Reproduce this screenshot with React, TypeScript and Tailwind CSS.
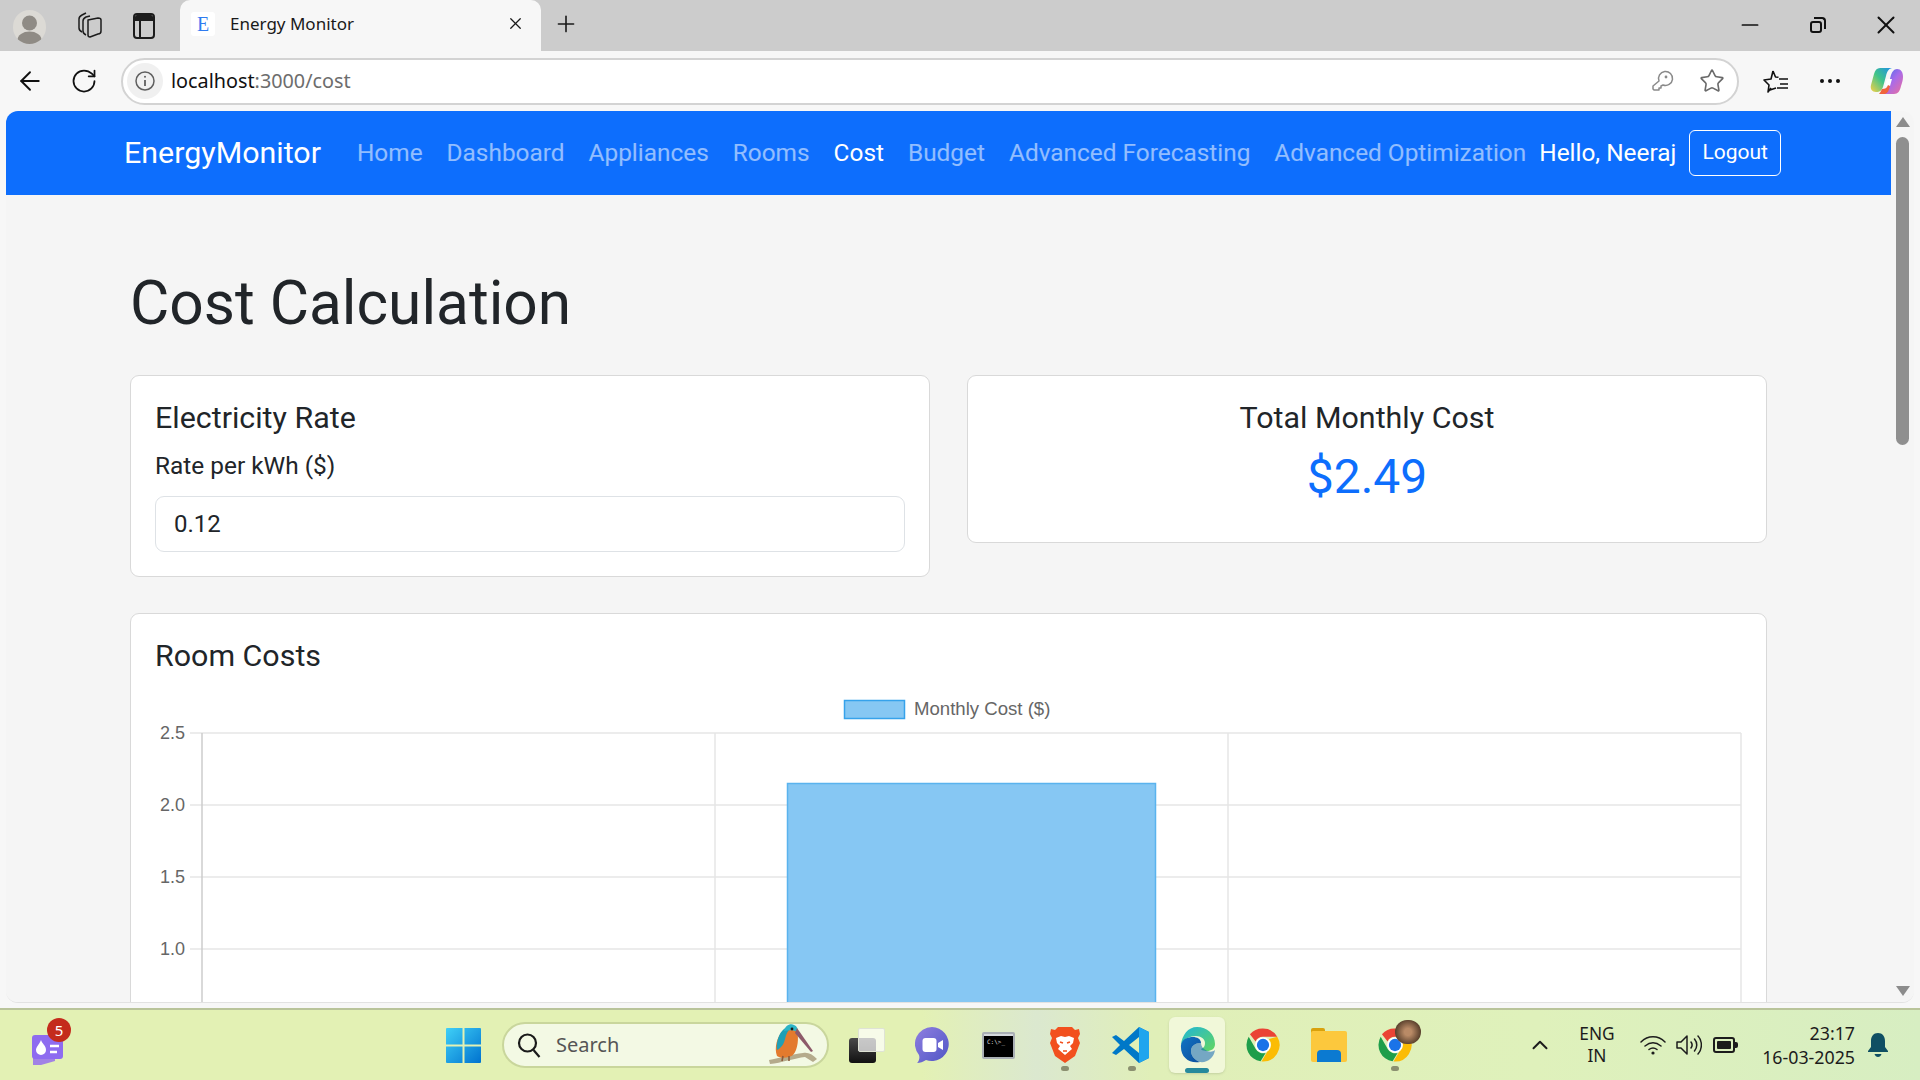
import React from "react";
import { ArrowLeft, RotateCw, Plus, X, Minus, Star, ChevronUp } from "lucide-react";

const navLinks = ["Home", "Dashboard", "Appliances", "Rooms", "Cost", "Budget", "Advanced Forecasting", "Advanced Optimization"];

function Chrome({ size = 36 }: { size?: number }) {
  return (
    <svg width={size} height={size} viewBox="0 0 48 48">
      <path d="M24 2a22 22 0 0 1 19.05 11H24a11 11 0 0 0-9.9 6.2L6.6 9.7A22 22 0 0 1 24 2z" fill="#ea4335" />
      <path d="M4.95 13 14.5 29.5A11 11 0 0 0 27.5 34.5L20.8 45.8A22 22 0 0 1 4.95 13z" fill="#1e9e4a" />
      <path d="M43.05 13A22 22 0 0 1 22 46L31.6 29.5A11 11 0 0 0 31.8 16z" fill="#fbbc04" />
      <circle cx="24" cy="24" r="10.5" fill="#fff" />
      <circle cx="24" cy="24" r="8.2" fill="#1a73e8" />
    </svg>
  );
}

function Copilot() {
  return (
    <svg width="34" height="32" viewBox="0 0 34 32">
      <defs>
        <linearGradient id="cpA" x1="0" y1="1" x2="1" y2="0">
          <stop offset="0" stopColor="#f7d046" />
          <stop offset="0.5" stopColor="#3fc48a" />
          <stop offset="1" stopColor="#1f8fe8" />
        </linearGradient>
        <linearGradient id="cpB" x1="0" y1="0" x2="1" y2="1">
          <stop offset="0" stopColor="#2f6fe8" />
          <stop offset="0.5" stopColor="#a86bea" />
          <stop offset="1" stopColor="#ee6f9a" />
        </linearGradient>
      </defs>
      <path d="M10 3h12c-4 1-5 4-6 8l-3 11c-1 3-3 5-7 5-4 0-6-3-5-7l3-11C5 5 7 3 10 3z" fill="url(#cpA)" />
      <path d="M24 29H12c4-1 5-4 6-8l3-11c1-3 3-6 6-6 4 0 6 3 6 8 0 3-1 6-2 9-1 5-3 8-7 8z" fill="url(#cpB)" />
      <path d="M17 14h5l-2 7h-5z" fill="#fff" />
      <path d="M12 24c3 0 5-1 6-4l2 1c-1 4-2 7-5 8H9c1-1 2-3 3-5z" fill="#f0643c" />
    </svg>
  );
}

function Bird() {
  return (
    <svg width="56" height="46" viewBox="0 0 56 46">
      <path d="M4 38c10-2 24-6 34-7 5-1 9 1 14 6l-4 3-8-5c-10 1-24 6-35 7z" fill="#b5ab8c" />
      <path d="M12 34c-3-8 0-20 6-25 5-5 12-4 14 1 2 5 1 18-4 23-4 3-12 4-16 1z" fill="#e37a2e" />
      <path d="M12 28c-1-8 2-17 7-21 3-2 6-3 8-2-4 3-6 7-7 12-1 5-4 9-8 11z" fill="#1f9fb5" />
      <path d="M19 9c1-5 6-8 10-6 3 1 4 4 4 7-4-2-9-2-14-1z" fill="#2cb4c6" />
      <path d="M32 6l16 23-2 1L30 11z" fill="#8d5a6a" />
      <circle cx="27" cy="7" r="1.4" fill="#1a1a1a" />
      <path d="M18 34l-1 5M24 34l0 5" stroke="#8a5a3a" strokeWidth="1.6" />
    </svg>
  );
}

function Chart() {
  const hLines = [733, 805, 877, 949];
  const labels = ["2.5", "2.0", "1.5", "1.0"];
  const ox = 155;
  const oy = 686;
  return (
    <svg width="1587" height="330" viewBox={`${ox} ${oy} 1587 330`} className="block">
      <rect x="844.5" y="700.5" width="60" height="18" fill="#86c7f3" stroke="#36a2eb" strokeWidth="1.5" />
      <text x="914" y="715" fontFamily="Liberation Sans" fontSize="18.6" fill="#666666">Monthly Cost ($)</text>
      {hLines.map((y, i) => (
        <g key={y}>
          <line x1="190" x2="1741" y1={y} y2={y} stroke="#e6e6e6" strokeWidth="1.5" />
          <text x="185" y={y + 6} textAnchor="end" fontFamily="Liberation Sans" fontSize="18" fill="#666666">{labels[i]}</text>
        </g>
      ))}
      <line x1="202" x2="202" y1="733" y2="1016" stroke="#cccccc" strokeWidth="1.5" />
      <line x1="715" x2="715" y1="733" y2="1016" stroke="#e6e6e6" strokeWidth="1.5" />
      <line x1="1228" x2="1228" y1="733" y2="1016" stroke="#e6e6e6" strokeWidth="1.5" />
      <line x1="1741" x2="1741" y1="733" y2="1016" stroke="#e6e6e6" strokeWidth="1.5" />
      <rect x="787.5" y="783.5" width="368" height="240" fill="#86c7f3" stroke="#5ab3ee" strokeWidth="1.5" />
    </svg>
  );
}

function TabStrip() {
  return (
    <div className="h-[51px] bg-[#cccccc] flex items-end shrink-0">
      <div className="ml-[13px] mb-[7px] w-[33px] h-[34px] rounded-full bg-[#dcdad5] overflow-hidden flex items-center justify-center">
        <svg width="33" height="34" viewBox="0 0 33 34">
          <circle cx="16.5" cy="13" r="7.5" fill="#8f8b85" />
          <ellipse cx="16.5" cy="30" rx="12" ry="8.5" fill="#8f8b85" />
        </svg>
      </div>
      <div className="ml-[31px] mb-[13px]">
        <svg width="26" height="26" viewBox="0 0 26 26" fill="none" stroke="#1c1c1c" strokeWidth="1.5" strokeLinejoin="round">
          <path d="M5 20c-2-1-3-3-3-4V7c0-2 1-3 3-4l4-2" />
          <path d="M9 23c-2-1-3-2-3-4V9c0-2 1-3 3-4l4-1" />
          <path d="M11 8l10-2c2 0 3 1 3 2v11c0 2-1 3-3 3l-8 3c-1 0-2-1-2-2z" />
        </svg>
      </div>
      <div className="ml-[30px] mb-[12px] w-[22px] h-[26px] rounded-[4px] border-2 border-[#1c1c1c] overflow-hidden flex flex-col">
        <div className="h-[6px] bg-[#1c1c1c]" />
        <div className="flex-1 w-[6px] border-r-2 border-[#1c1c1c]" />
      </div>
      <div className="ml-[25px] w-[361px] h-[51px] bg-[#f7f7f7] rounded-t-[10px] flex items-center pl-[11px] pr-[16px] pb-[4px]">
        <div className="w-[24px] h-[24px] bg-white rounded-[3px] flex items-center justify-center text-[#2f7bf0] text-[20px] font-['Liberation_Serif',serif]">E</div>
        <span className="ml-[15px] text-[17px] text-[#1a1a1a] font-['Noto_Sans',sans-serif] flex-1">Energy Monitor</span>
        <X size={19} strokeWidth={1.6} className="text-[#1a1a1a]" />
      </div>
      <Plus size={26} strokeWidth={1.5} className="ml-[12px] mb-[14px] text-[#1a1a1a]" />
      <div className="flex-1" />
      <Minus size={26} strokeWidth={1.6} className="mb-[13px] text-[#111111]" />
      <div className="ml-[47px] mb-[18px] relative w-[16px] h-[16px]">
        <div className="absolute left-0 bottom-0 w-[12px] h-[12px] rounded-[3px] border-2 border-[#111111]" />
        <div className="absolute right-0 top-0 w-[12px] h-[12px] rounded-tr-[4px] border-t-2 border-r-2 border-[#111111]" />
      </div>
      <X size={30} strokeWidth={1.6} className="ml-[45px] mb-[11px] mr-[19px] text-[#111111]" />
    </div>
  );
}

function Toolbar() {
  return (
    <div className="h-[60px] bg-[#f7f7f7] flex items-center shrink-0">
      <ArrowLeft size={30} strokeWidth={1.5} className="ml-[15px] text-[#111111]" />
      <RotateCw size={28} strokeWidth={1.5} className="ml-[25px] text-[#111111]" />
      <div className="ml-[23px] w-[1618px] h-[47px] rounded-full border-2 border-[#d3d3d3] bg-white flex items-center pl-[4px] pr-[12px]">
        <div className="w-[36px] h-[36px] rounded-full bg-[#f0f0f0] flex items-center justify-center">
          <svg width="22" height="22" viewBox="0 0 22 22" fill="none" stroke="#5f5f5f" strokeWidth="1.5">
            <circle cx="11" cy="11" r="9" />
            <path d="M11 10v6" strokeWidth="1.8" />
            <circle cx="11" cy="6.8" r="1" fill="#5f5f5f" stroke="none" />
          </svg>
        </div>
        <span className="ml-[8px] text-[19.8px] font-['Noto_Sans',sans-serif] text-[#111111]">
          localhost<span className="text-[#6d6d6d]">:3000/cost</span>
        </span>
        <div className="flex-1" />
        <svg width="24" height="24" viewBox="0 0 24 24" fill="none" stroke="#8a8a8a" strokeWidth="1.5" strokeLinejoin="round">
          <path d="M9 12a7 7 0 1 1 4 4l-2 1v2H9v2H4l-1-1v-3z" />
          <circle cx="16" cy="8" r="1.4" fill="#8a8a8a" stroke="none" />
        </svg>
        <Star size={26} strokeWidth={1.5} className="ml-[25px] text-[#6a6a6a]" />
      </div>
      <svg className="ml-[24px]" width="26" height="26" viewBox="0 0 26 26" fill="none" stroke="#111111" strokeWidth="1.6" strokeLinejoin="round">
        <path d="M10 3l2.5 6 3 .3M8 20l-3 4 1-7-5-5 7-1 2-8M7 22l6-2" />
        <path d="M16 11h9M17 16h8M14 20h11" />
      </svg>
      <div className="ml-[31px] flex gap-[4px]">
        <div className="w-[4px] h-[4px] rounded-full bg-[#111111]" />
        <div className="w-[4px] h-[4px] rounded-full bg-[#111111]" />
        <div className="w-[4px] h-[4px] rounded-full bg-[#111111]" />
      </div>
      <div className="ml-[30px]">
        <Copilot />
      </div>
    </div>
  );
}

function Scrollbar() {
  return (
    <div className="w-[23px] bg-[#f5f5f5] flex flex-col items-center shrink-0 pt-[6px] pb-[6px]">
      <div className="w-0 h-0 border-l-[7px] border-r-[7px] border-b-[10px] border-l-transparent border-r-transparent border-b-[#8c8c8c]" />
      <div className="mt-[10px] w-[13px] h-[308px] rounded-full bg-[#8f8f8f]" />
      <div className="flex-1" />
      <div className="w-0 h-0 border-l-[7px] border-r-[7px] border-t-[10px] border-l-transparent border-r-transparent border-t-[#8c8c8c]" />
    </div>
  );
}

function Page() {
  return (
    <div className="flex-1 min-w-0 overflow-hidden bg-[#f5f5f5] font-['Roboto',sans-serif] text-[#212529]">
      <nav className="h-[84px] bg-[#0d6efd] flex items-center pl-[118px]">
        <span className="text-[30.4px] text-white mr-[24px]">EnergyMonitor</span>
        {navLinks.map((l) => (
          <span key={l} className={`px-[12px] text-[24.4px] ${l === "Cost" ? "text-white" : "text-white/55"}`}>{l}</span>
        ))}
        <span className="ml-[1px] text-[24.4px] text-white whitespace-nowrap">Hello, Neeraj</span>
        <span className="ml-[13px] h-[46px] px-[12px] flex items-center border border-white rounded-[6px] text-[21px] text-white">Logout</span>
      </nav>
      <main className="px-[124px] pt-[73px]">
        <h1 className="text-[60.4px] leading-[72px] mb-[35px]">Cost Calculation</h1>
        <div className="grid grid-cols-2 gap-x-[37px] items-start mb-[36px]">
          <section className="bg-white border border-[#d9d9d9] rounded-[9px] p-[24px]">
            <h5 className="text-[30.4px] leading-[36px] mb-[12px]">Electricity Rate</h5>
            <label className="block text-[24.4px] leading-[36px] mb-[12px]">Rate per kWh ($)</label>
            <div className="h-[56px] border border-[#dee2e6] rounded-[9px] flex items-center px-[18px] text-[24px]">0.12</div>
          </section>
          <section className="bg-white border border-[#d9d9d9] rounded-[9px] p-[24px] text-center">
            <h5 className="text-[30.4px] leading-[36px] mb-[12px]">Total Monthly Cost</h5>
            <div className="text-[48px] leading-[58px] mb-[12px] text-[#0d6efd]">$2.49</div>
          </section>
        </div>
        <section className="bg-white border border-[#d9d9d9] rounded-[9px] p-[24px]">
          <h5 className="text-[30.4px] leading-[36px] mb-[12px]">Room Costs</h5>
          <Chart />
        </section>
      </main>
    </div>
  );
}

function Dot({ left }: { left: string }) {
  return <div className={`absolute bottom-[-8px] ${left} w-[8px] h-[5px] rounded-full bg-[#8b9070]`} />;
}

function Taskbar() {
  return (
    <div className="h-[72px] shrink-0 border-t-2 border-[#b9c49a] bg-[linear-gradient(90deg,#e3f1b4_0%,#e3f1b4_48%,#dbe8cf_54%,#e0efb8_60%,#dff1bb_80%,#d7eec2_100%)] flex items-center relative font-['Noto_Sans',sans-serif]">
      <div className="ml-[30px] relative w-[33px] h-[30px] mt-[6px]">
        <svg width="33" height="32" viewBox="0 0 33 32">
          <path d="M3 14h22v14l-14 4H3z" fill="#8b5cf6" opacity="0.75" />
          <rect x="2" y="2" width="31" height="24" rx="3" fill="#8e6cf0" />
          <path d="M11 7c1 4 5 5 5 10a5 5 0 0 1-10 0c0-3 3-5 5-10z" fill="#fff" />
          <path d="M20 13h9M20 19h7" stroke="#fff" strokeWidth="2.4" />
        </svg>
        <div className="absolute left-[17px] top-[-15px] w-[24px] h-[24px] rounded-full bg-[#c42b1c] text-white text-[15px] flex items-center justify-center">5</div>
      </div>
      <div className="ml-[383px]">
        <svg width="35" height="35" viewBox="0 0 35 35">
          <defs>
            <linearGradient id="winG" x1="0" y1="0" x2="1" y2="1">
              <stop offset="0" stopColor="#3fd0f7" />
              <stop offset="1" stopColor="#0072cf" />
            </linearGradient>
          </defs>
          <path d="M1 0h15.5v16.5H0V1a1 1 0 0 1 1-1zM18.500 0H34a1 1 0 0 1 1 1v15.500H18.500zM0 18.500h16.500V35H1a1 1 0 0 1-1-1zM18.500 18.500H35V34a1 1 0 0 1-1 1H18.500z" fill="url(#winG)" />
        </svg>
      </div>
      <div className="ml-[21px] w-[327px] h-[46px] rounded-full bg-[#f3f9e4] border-2 border-[#c9d69c] flex items-center pl-[13px] pr-[6px]">
        <svg width="24" height="26" viewBox="0 0 24 26" fill="none" stroke="#1a1a1a" strokeWidth="2.2">
          <circle cx="10.500" cy="11" r="8.500" />
          <path d="M16.500 18l6 7" />
        </svg>
        <span className="ml-[15px] text-[20px] text-[#555555] flex-1">Search</span>
        <Bird />
      </div>
      <div className="ml-[20px] relative w-[36px] h-[35px]">
        <div className="absolute left-0 bottom-0 w-[27px] h-[25px] rounded-[3px] bg-[linear-gradient(180deg,#4a4a4a,#111111)]" />
        <div className="absolute right-0 top-0 w-[27px] h-[24px] rounded-[2px] bg-white/70 border border-[#dfe3d5]" />
      </div>
      <div className="ml-[30px] relative w-[34px] h-[37px]">
        <svg width="34" height="37" viewBox="0 0 34 37">
          <defs>
            <linearGradient id="meetG" x1="0" y1="0" x2="1" y2="1">
              <stop offset="0" stopColor="#8f7fe0" />
              <stop offset="1" stopColor="#4f55c5" />
            </linearGradient>
          </defs>
          <path d="M17 0a17 17 0 1 1-6 33c-3 2-6 3-9 3 2-2 3-5 2-8A17 17 0 0 1 17 0z" fill="url(#meetG)" />
          <rect x="7.500" y="11" width="14" height="14" rx="3" fill="#fff" />
          <path d="M23 16l5-3v10l-5-3z" fill="#fff" />
        </svg>
      </div>
      <div className="ml-[33px] w-[33px] h-[27px] bg-black border-2 border-[#aab0b5] rounded-[2px] relative">
        <div className="absolute top-0 left-0 right-0 h-[2px] bg-[#d5d9dd]" />
        <div className="absolute left-[3px] top-[4px] text-[6px] leading-[7px] text-[#dddddd] font-['DejaVu_Sans_Mono',monospace]">C:\&gt;_</div>
      </div>
      <div className="ml-[35px] relative w-[30px] h-[36px]">
        <svg width="30" height="36" viewBox="0 0 30 36">
          <path d="M8 0h14l3 3 4-1 1 5-2 4 2 5-5 13-10 7-10-7L0 16l2-5-2-4 1-5 4 1z" fill="#f2501e" />
          <path d="M6 11l5-2 4 1 4-1 5 2-1 5-3 3 2 3-7 6-7-6 2-3-3-3z" fill="#fff" />
          <path d="M10 15l3 1M20 15l-3 1M13 24h4" stroke="#f2501e" strokeWidth="1.6" />
        </svg>
        <div className="absolute bottom-[-8px] left-[11px] w-[8px] h-[5px] rounded-full bg-[#8b9070]" />
      </div>
      <div className="ml-[32px] relative w-[37px] h-[36px]">
        <svg width="37" height="36" viewBox="0 0 37 36">
          <path d="M27 0l10 5v26l-10 5-15-14-8 6-4-2 8-8-8-8 4-2 8 6z" fill="#0078c8" />
          <path d="M27 0l10 5v26l-10 5z" fill="#1fa5ee" />
          <path d="M27 10v16l-10-8z" fill="#e2f0b6" />
        </svg>
        <Dot left="left-[16px]" />
      </div>
      <div className="ml-[20px] relative w-[56px] h-[56px] rounded-[6px] bg-[#f1f8d9] flex items-center justify-center shadow-sm">
        <svg width="36" height="36" viewBox="0 0 36 36">
          <defs>
            <linearGradient id="edgeA" x1="0" y1="0" x2="1" y2="1">
              <stop offset="0" stopColor="#1fb6d8" />
              <stop offset="1" stopColor="#63d65f" />
            </linearGradient>
            <linearGradient id="edgeB" x1="0" y1="0" x2="1" y2="1">
              <stop offset="0" stopColor="#1273c4" />
              <stop offset="1" stopColor="#0c4f9c" />
            </linearGradient>
          </defs>
          <path d="M18 0c10 0 18 7 18 17 0 5-4 7-8 7-3 0-6-1-6-2 3-1 4-3 4-6 0-4-4-7-9-7-6 0-12 3-15 9C3 8 9 0 18 0z" fill="url(#edgeA)" />
          <path d="M2 18C3 12 9 10 14 10c4 0 8 2 8 6-6 0-10 3-10 8 0 5 4 9 9 11C10 37 1 30 2 18z" fill="url(#edgeB)" />
          <path d="M21 35c-5-2-9-6-9-11 0-5 4-8 10-8 0 3 2 6 6 8 3 1 6 1 8-1-1 8-8 13-15 12z" fill="#0f64b0" opacity="0.55" />
        </svg>
        <div className="absolute bottom-0 left-[16px] w-[24px] h-[5px] rounded-full bg-[#268a9c]" />
      </div>
      <div className="ml-[20px]"><Chrome /></div>
      <div className="ml-[30px] w-[36px] h-[34px] relative">
        <div className="absolute left-0 top-0 w-[14px] h-[8px] rounded-t-[2px] bg-[#d9a10c]" />
        <div className="absolute left-0 right-0 top-[3px] bottom-0 rounded-[2px] bg-[#fcc83d]" />
        <div className="absolute left-[6px] right-[6px] bottom-0 h-[12px] rounded-t-[4px] bg-[#0b7ad1]" />
      </div>
      <div className="ml-[30px] relative w-[36px] h-[36px]">
        <Chrome />
        <div className="absolute left-[18px] top-[-7px] w-[26px] h-[24px] rounded-full bg-[radial-gradient(circle,#b98a66_20%,#4a3423_80%)]" />
        <Dot left="left-[14px]" />
      </div>
      <ChevronUp size={26} strokeWidth={1.8} className="ml-[114px] text-[#1c1c1c]" />
      <div className="ml-[24px] w-[40px] flex flex-col items-center text-[17.3px] leading-[22px] text-[#1c1c1c]">
        <span>ENG</span>
        <span>IN</span>
      </div>
      <svg className="ml-[23px]" width="26" height="20" viewBox="0 0 26 20" fill="none" stroke="#1c1c1c" strokeWidth="1.5" strokeLinecap="round">
        <path d="M1 7c7-7 17-7 24 0M5 11c5-4 11-4 16 0M9 14.500c2.500-2 5.500-2 8 0" />
        <circle cx="13" cy="18" r="1.6" fill="#1c1c1c" stroke="none" />
      </svg>
      <svg className="ml-[10px]" width="26" height="22" viewBox="0 0 26 22" fill="none" stroke="#1c1c1c" strokeWidth="1.5" strokeLinejoin="round" strokeLinecap="round">
        <path d="M1 8v6h4l6 6V2L5 8z" />
        <path d="M15 8c1.500 2 1.500 4 0 6M18.500 5c3 3.500 3 8.500 0 12M22 2c4.500 5 4.500 13 0 18" />
      </svg>
      <div className="ml-[11px] w-[22px] h-[16px] rounded-[3px] border-2 border-[#1c1c1c] p-[2px]">
        <div className="h-full w-[14px] bg-[#1c1c1c] rounded-[1px]" />
      </div>
      <div className="w-[3px] h-[6px] bg-[#1c1c1c] rounded-r-[2px]" />
      <div className="ml-[17px] w-[100px] flex flex-col items-end text-[17.8px] leading-[24px] text-[#1c1c1c]">
        <span>23:17</span>
        <span className="whitespace-nowrap">16-03-2025</span>
      </div>
      <svg className="ml-[13px]" width="20" height="24" viewBox="0 0 20 24">
        <path d="M10 0c4.500 0 7 3.500 7 8v6l3 4v1H0v-1l3-4V8c0-4.500 2.500-8 7-8z" fill="#0f4f63" />
        <path d="M6.500 21h7c-.5 2-2 3-3.500 3s-3-1-3.500-3z" fill="#0f4f63" />
      </svg>
    </div>
  );
}

export default function App() {
  return (
    <div className="w-[1920px] h-[1080px] overflow-hidden flex flex-col bg-[#f7f7f7]">
      <TabStrip />
      <Toolbar />
      <div className="h-[892px] shrink-0 ml-[6px] mr-[6px] rounded-t-[12px] rounded-b-[12px] overflow-hidden flex border-b border-[#e2e2e2]">
        <Page />
        <Scrollbar />
      </div>
      <div className="h-[5px] shrink-0" />
      <Taskbar />
    </div>
  );
}
